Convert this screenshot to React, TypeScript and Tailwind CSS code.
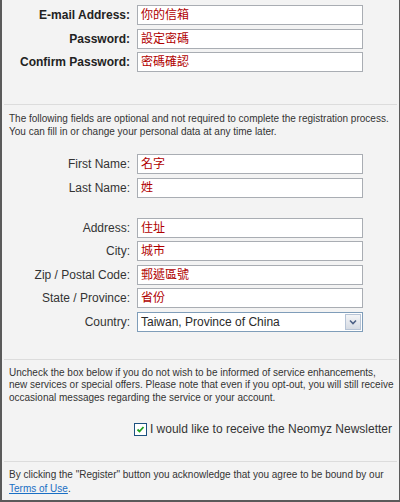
import React from "react";

const FONT = { fontFamily: '"Liberation Sans", Arial, "Noto Sans CJK TC", sans-serif' };

function Field({ label, value, bold }: { label: string; value: string; bold?: boolean }) {
  return (
    <div className="flex h-[20px] items-center">
      <label
        className={`w-[130px] pr-[2px] text-right text-[12px] ${bold ? "font-bold text-[#222]" : "text-[#333]"}`}
      >
        {label}
      </label>
      <div className="ml-[5px] flex h-[20px] w-[226px] items-center border border-[#a9adb3] bg-white pl-[3px] text-[12px] text-[#b00000]">
        {value}
      </div>
    </div>
  );
}

function Rule() {
  return <div className="h-[2px] border-t border-[#dcdcdc] border-b-white" />;
}

export default function App() {
  return (
    <div
      style={FONT}
      className="h-[502px] w-[400px] overflow-hidden border-b-2 border-l-2 border-r border-[#5a5a5a] bg-[#f3f3f3]"
    >
      {/* required */}
      <div className="flex flex-col gap-[3.5px] pt-[5px]">
        <Field bold label="E-mail Address:" value="你的信箱" />
        <Field bold label="Password:" value="設定密碼" />
        <Field bold label="Confirm Password:" value="密碼確認" />
      </div>

      <div className="mt-[32px] px-[2px]">
        <Rule />
      </div>

      <p className="mt-[6px] px-[7px] text-[10px] leading-[13px] text-[#333]">
        The following fields are optional and not required to complete the registration process.
        You can fill in or change your personal data at any time later.
      </p>

      {/* optional */}
      <div className="mt-[16px] flex flex-col gap-[3.5px]">
        <Field label="First Name:" value="名字" />
        <Field label="Last Name:" value="姓" />
      </div>
      <div className="mt-[20px] flex flex-col gap-[3.5px]">
        <Field label="Address:" value="住址" />
        <Field label="City:" value="城市" />
        <Field label="Zip / Postal Code:" value="郵遞區號" />
        <Field label="State / Province:" value="省份" />
        <div className="flex h-[20px] items-center">
          <label className="w-[130px] pr-[2px] text-right text-[12px] text-[#333]">Country:</label>
          <div className="ml-[5px] flex h-[20px] w-[226px] items-center border border-[#7f9db9] bg-white pl-[3px] text-[12px] text-[#2a2a2a]">
            <span className="flex-1">Taiwan, Province of China</span>
            <div className="mr-[1px] flex h-[16px] w-[16px] items-center justify-center border border-[#b7c4d6] bg-gradient-to-b from-[#f4f5f7] to-[#d6dbe3]">
              <svg width="8" height="6" viewBox="0 0 8 6">
                <path d="M1 1.5 L4 4.5 L7 1.5" fill="none" stroke="#4d6185" strokeWidth="1.6" />
              </svg>
            </div>
          </div>
        </div>
      </div>

      <div className="mt-[27px] px-[2px]">
        <Rule />
      </div>

      <div className="mt-[6px] pl-[7px] text-[10px] leading-[12.5px] whitespace-nowrap text-[#333]">
        <div>Uncheck the box below if you do not wish to be informed of service enhancements,</div>
        <div>new services or special offers. Please note that even if you opt-out, you will still receive</div>
        <div>occasional messages regarding the service or your account.</div>
      </div>

      <div className="mt-[16px] flex items-center justify-end pr-[7px]">
        <span className="flex h-[13px] w-[13px] items-center justify-center border border-[#1c5180] bg-white">
          <svg width="9" height="9" viewBox="0 0 9 9">
            <path d="M1.5 4.5 L3.5 6.5 L7.5 2" fill="none" stroke="#21a121" strokeWidth="1.8" />
          </svg>
        </span>
        <span className="ml-[3px] text-[12px] text-[#333]">I would like to receive the Neomyz Newsletter</span>
      </div>

      <div className="mt-[23px] px-[2px]">
        <Rule />
      </div>

      <p className="mt-[5px] px-[7px] text-[10px] leading-[14px] text-[#333]">
        By clicking the "Register" button you acknowledge that you agree to be bound by our{" "}
        <a href="#" className="text-[#1a6fc4] underline">
          Terms of Use
        </a>
        .
      </p>
    </div>
  );
}
